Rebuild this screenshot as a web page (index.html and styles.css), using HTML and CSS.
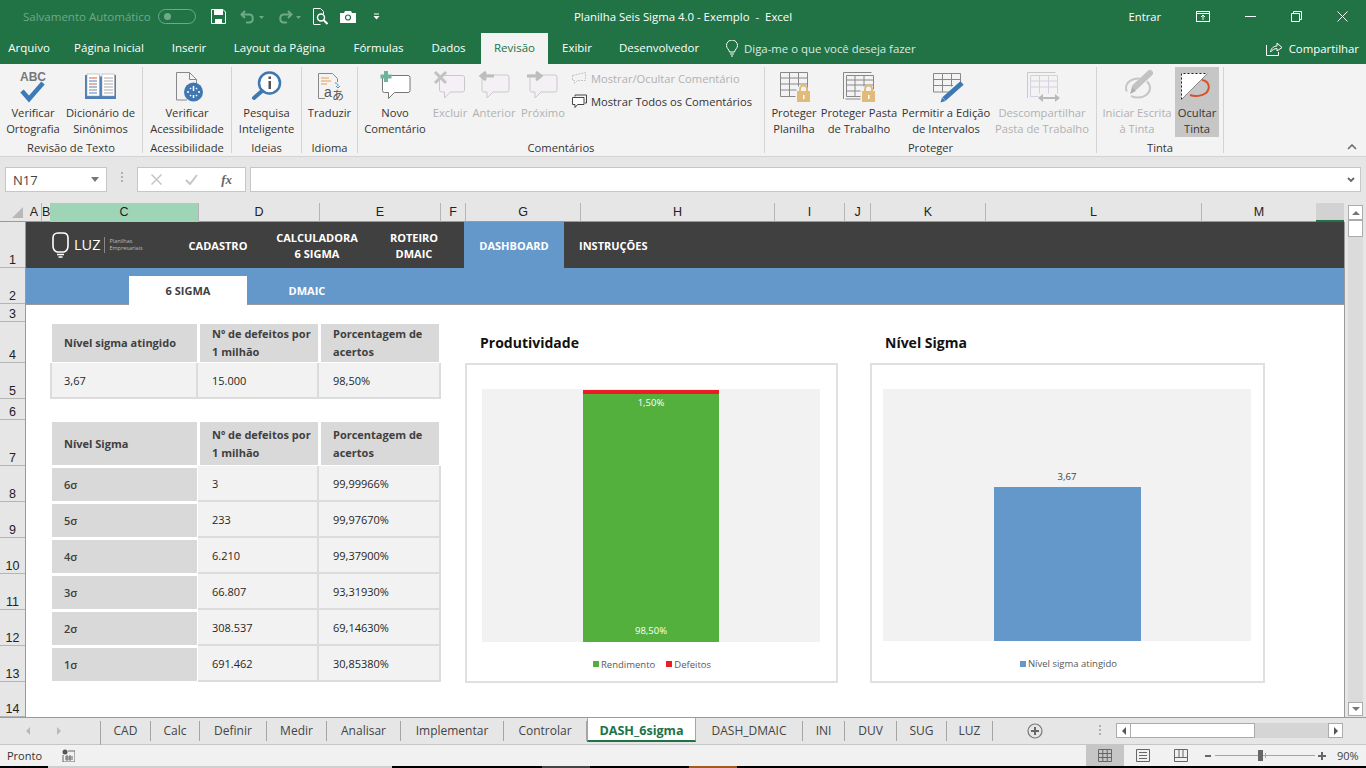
FILE: index.html
```html
<!DOCTYPE html>
<html lang="pt-BR">
<head>
    <meta charset="UTF-8">
    <title>Planilha Seis Sigma 4.0 - Exemplo - Excel</title>
    <link rel="stylesheet" href="styles.css">
</head>
<body>
<div class="app">

    <!-- barra de titulo -->
    <div class="titlebar">
        <div class="qat">
            <span class="autosave">Salvamento Automático</span>
            <span class="toggle"><i></i></span>
            <svg class="qat-save" width="15" height="15" viewBox="0 0 15 15"><path d="M.5.5h11.500l2.500 2.500v11.500H.5z" fill="none" stroke="#fff"/><rect x="3" y="1" width="9" height="5" fill="#fff"/><rect x="4" y="10" width="7" height="4.500" fill="#fff"/></svg>
            <svg class="qat-undo" width="24" height="14" viewBox="0 0 24 14"><path d="M5 1 1.500 4.500 5 8M2 4.500h7c5 0 5 8 0 8H6" fill="none" stroke="#6ea98a" stroke-width="2"/><path d="M19 6h5l-2.500 3z" fill="#6ea98a"/></svg>
            <svg class="qat-redo" width="24" height="14" viewBox="0 0 24 14"><path d="M11 1l3.500 3.500L11 8M14 4.500H7c-5 0-5 8 0 8h3" fill="none" stroke="#6ea98a" stroke-width="2"/><path d="M19 6h5l-2.500 3z" fill="#6ea98a"/></svg>
            <svg class="qat-print" width="15" height="17" viewBox="0 0 15 17"><path d="M.5 16V.5h7l3 3V6" fill="none" stroke="#fff"/><path d="M.5 16.500h7" stroke="#fff"/><circle cx="8" cy="9.500" r="3.500" fill="none" stroke="#fff" stroke-width="1.500"/><path d="M10.500 12l4 4" stroke="#fff" stroke-width="2"/></svg>
            <svg class="qat-cam" width="16" height="13" viewBox="0 0 16 13"><path d="M0 3h4l1-2h6l1 2h4v10H0z" fill="#fff"/><circle cx="8" cy="7.500" r="2.500" fill="none" stroke="#217346" stroke-width="1.200"/></svg>
            <svg class="qat-more" width="7" height="7" viewBox="0 0 7 7"><path d="M1 1h5" stroke="#fff"/><path d="M.5 3h6L3.500 6.500z" fill="#fff"/></svg>
        </div>
        <div class="doc-title">Planilha Seis Sigma 4.0 - Exemplo &nbsp;-&nbsp; Excel</div>
        <div class="win-btns">
            <span class="signin">Entrar</span>
            <svg class="win-display" width="15" height="11" viewBox="0 0 15 11"><rect x=".5" y=".5" width="13" height="10" fill="none" stroke="#fff"/><path d="M1 2.500h12" stroke="#fff"/><path d="M7 9V4.500M5 6l2-2 2 2" fill="none" stroke="#fff"/></svg>
            <svg class="win-min" width="11" height="11" viewBox="0 0 11 11"><path d="M0 5.500h11" stroke="#fff"/></svg>
            <svg class="win-max" width="11" height="11" viewBox="0 0 11 11"><path d="M.5 2.500h8v8h-8zM2.500 2.500v-2h8v8h-2" fill="none" stroke="#fff"/></svg>
            <svg class="win-close" width="11" height="11" viewBox="0 0 11 11"><path d="M.5.500l10 10M10.500.500l-10 10" stroke="#fff"/></svg>
        </div>
    </div>

    <!-- abas da faixa de opcoes -->
    <div class="menu">
        <span class="menu-item">Arquivo</span>
        <span class="menu-item">Página Inicial</span>
        <span class="menu-item">Inserir</span>
        <span class="menu-item">Layout da Página</span>
        <span class="menu-item">Fórmulas</span>
        <span class="menu-item">Dados</span>
        <span class="menu-item active">Revisão</span>
        <span class="menu-item">Exibir</span>
        <span class="menu-item">Desenvolvedor</span>
        <span class="tell-me">
            <svg width="12" height="17" viewBox="0 0 12 17"><path d="M3.500 12C3 9 .5 8.500.5 5.500a5.500 5.500 0 0 1 11 0C11.500 8.500 9 9 8.500 12zM4 14h4M5 16h2" fill="none" stroke="#fff"/></svg>
            Diga-me o que você deseja fazer
        </span>
        <span class="share">
            <svg width="17" height="15" viewBox="0 0 17 15"><path d="M.5 4v10.500h12V11" fill="none" stroke="#fff"/><path d="M4.500 11C5 7 8 5 11 5V2l5 4.500L11 10V7.500C8.500 7.500 6 9 4.500 11z" fill="none" stroke="#fff"/></svg>
            Compartilhar
        </span>
    </div>

    <!-- faixa de opcoes -->
    <div class="ribbon">
        <div class="rib-group g-text">
            <div class="rib-items">
                <div class="rib-btn">
                    <svg class="rib-icon" width="36" height="36" viewBox="0 0 36 36"><text class="icon-abc" x="5" y="14">ABC</text><path d="M7 24l7 8L28 16" fill="none" stroke="#3d7ab8" stroke-width="4.500"/></svg>
                    <span>Verificar<br>Ortografia</span>
                </div>
                <div class="rib-btn">
                    <svg class="rib-icon" width="36" height="36" viewBox="0 0 36 36"><path d="M2 8h14l2 2 2-2h13v24H2z" fill="#4b80bc"/><rect x="4" y="7" width="12.500" height="22" fill="#fff" stroke="#999" stroke-width=".5"/><rect x="19" y="7" width="12.500" height="22" fill="#fff" stroke="#999" stroke-width=".5"/><path d="M6 11h8" stroke="#d9603b"/><path d="M6 14h8M6 20h8M6 26h8" stroke="#4b80bc"/><path d="M6 17h8" stroke="#d9603b"/><path d="M6 23h8" stroke="#888"/><path d="M21 11h9M21 14h9M21 17h9M21 20h9M21 23h9M21 26h9" stroke="#aaa"/></svg>
                    <span>Dicionário de<br>Sinônimos</span>
                </div>
            </div>
            <div class="rib-label">Revisão de Texto</div>
        </div>
        <div class="rib-group g-access">
            <div class="rib-items">
                <div class="rib-btn">
                    <svg class="rib-icon" width="36" height="36" viewBox="0 0 36 36"><path d="M7.500 33V5.500h13l7 7V20M7.500 33H18M20.500 5.500v7h7" fill="none" stroke="#888"/><circle cx="24.500" cy="25" r="9.500" fill="#3e78b3"/><path d="M24.500 19v5M20 25h-2M29 25h2M21 21l1 1M28 21l-1 1M21 29l1-1M28 29l-1-1M24.500 28v3" stroke="#fff" stroke-width="1.500"/></svg>
                    <span>Verificar<br>Acessibilidade</span>
                </div>
            </div>
            <div class="rib-label">Acessibilidade</div>
        </div>
        <div class="rib-group g-ideas">
            <div class="rib-items">
                <div class="rib-btn">
                    <svg class="rib-icon" width="36" height="36" viewBox="0 0 36 36"><circle cx="20.500" cy="16" r="10.500" fill="#fff" stroke="#3e78b3" stroke-width="2.500"/><path d="M13 24l-8 7" stroke="#3e78b3" stroke-width="4" stroke-linecap="round"/><rect x="19.500" y="9.500" width="2.500" height="2.500" fill="#555"/><rect x="19.500" y="14" width="2.500" height="8" fill="#555"/></svg>
                    <span>Pesquisa<br>Inteligente</span>
                </div>
            </div>
            <div class="rib-label">Ideias</div>
        </div>
        <div class="rib-group g-lang">
            <div class="rib-items">
                <div class="rib-btn">
                    <svg class="rib-icon" width="36" height="36" viewBox="0 0 36 36"><path d="M6.500 31.500v-25h14l5 5V15M6.500 31.500H13" fill="none" stroke="#888"/><path d="M9 11h8M9 14h10M9 17h6" stroke="#ed9b4a"/><path d="M23 16c2 0 3 1 3 3M24 19l2 2 2-2" fill="none" stroke="#4b8bd0"/><text class="icon-a" x="12" y="30">a</text><text class="icon-jp" x="20" y="33">あ</text></svg>
                    <span>Traduzir</span>
                </div>
            </div>
            <div class="rib-label">Idioma</div>
        </div>
        <div class="rib-group g-comments">
            <div class="rib-items">
                <div class="rib-btn">
                    <svg class="rib-icon" width="36" height="36" viewBox="0 0 36 36"><path d="M5.500 10.500v13a2 2 0 0 0 2 2h4v6l6-6h13.500a2 2 0 0 0 2-2v-13a2 2 0 0 0-2-2h-24z" fill="#fff" stroke="#777"/><path d="M9 4v11M3.500 9.500h11" stroke="#6db39f" stroke-width="4"/></svg>
                    <span>Novo<br>Comentário</span>
                </div>
                <div class="rib-btn off">
                    <svg class="rib-icon" width="36" height="36" viewBox="0 0 36 36"><path d="M7.500 11v12a2 2 0 0 0 2 2h3v6l6-6h12a2 2 0 0 0 2-2V10.500a2 2 0 0 0-2-2h-22z" fill="#f5f0f6" stroke="#c9c9c9"/><path d="M3 5l11 11M14 5 3 16" stroke="#c2c2c2" stroke-width="3"/></svg>
                    <span>Excluir</span>
                </div>
                <div class="rib-btn off">
                    <svg class="rib-icon" width="36" height="36" viewBox="0 0 36 36"><path d="M6 11v12a2 2 0 0 0 2 2h3v6l6-6h14a2 2 0 0 0 2-2V10a2 2 0 0 0-2-2H6z" fill="#f5f0f6" stroke="#c9c9c9"/><path d="M18 9H6M10 5 5 9l5 4" fill="none" stroke="#bdbdbd" stroke-width="3"/></svg>
                    <span>Anterior</span>
                </div>
                <div class="rib-btn off">
                    <svg class="rib-icon" width="36" height="36" viewBox="0 0 36 36"><path d="M5 11v12a2 2 0 0 0 2 2h3v6l6-6h14a2 2 0 0 0 2-2V10a2 2 0 0 0-2-2H5z" fill="#f5f0f6" stroke="#c9c9c9"/><path d="M2 9h13M11 5l5 4-5 4" fill="none" stroke="#bdbdbd" stroke-width="3"/></svg>
                    <span>Próximo</span>
                </div>
                <div class="rib-stack">
                    <div class="stack-row off">
                        <svg width="15" height="15" viewBox="0 0 15 15"><path d="M.5 4.500l13-3v8h-8l-3 3v-3h-2z" fill="none" stroke="#c4c4c4" stroke-dasharray="2 1"/></svg>
                        Mostrar/Ocultar Comentário
                    </div>
                    <div class="stack-row">
                        <svg width="15" height="15" viewBox="0 0 15 15"><path d="M3 2.500V1h11.500v8H13" fill="none" stroke="#444"/><path d="M.5 3.500h11.500v7H5.500l-2.500 3v-3H.5z" fill="#fff" stroke="#444"/></svg>
                        Mostrar Todos os Comentários
                    </div>
                </div>
            </div>
            <div class="rib-label">Comentários</div>
        </div>
        <div class="rib-group g-protect">
            <div class="rib-items">
                <div class="rib-btn">
                    <svg class="rib-icon" width="36" height="36" viewBox="0 0 36 36"><path d="M4.500 5.500h27v18M4.500 5.500v24h15M4.500 11h27M4.500 17h27M4.500 23h16M13.500 5.500v24M22.500 5.500v14" fill="none" stroke="#888"/><path d="M24 25v-3a3.500 3.500 0 0 1 7 0v3" fill="none" stroke="#e2bb7b" stroke-width="2"/><rect x="21" y="24" width="13" height="11" fill="#e2bb7b"/><rect x="27" y="28" width="1.500" height="4" fill="#fff"/></svg>
                    <span>Proteger<br>Planilha</span>
                </div>
                <div class="rib-btn">
                    <svg class="rib-icon" width="36" height="36" viewBox="0 0 36 36"><path d="M2.500 32V5.500h28M4.500 32h15" fill="none" stroke="#888"/><path d="M5.500 8.500h27v14M5.500 8.500v21h14M5.500 13h27M5.500 18h27M5.500 24h14M14 8.500v21M23 8.500v11" fill="none" stroke="#888"/><path d="M24 25v-3a3.500 3.500 0 0 1 7 0v3" fill="none" stroke="#e2bb7b" stroke-width="2"/><rect x="21" y="24" width="13" height="11" fill="#e2bb7b"/><rect x="27" y="28" width="1.500" height="4" fill="#fff"/></svg>
                    <span>Proteger Pasta<br>de Trabalho</span>
                </div>
                <div class="rib-btn">
                    <svg class="rib-icon" width="36" height="36" viewBox="0 0 36 36"><path d="M5.500 6.500h27v9M5.500 6.500v18.500H22M5.500 12.500h27M5.500 18.500H25M14.500 6.500V25M23.500 6.500v13" fill="none" stroke="#888"/><path d="M16 32l18-16" stroke="#3e78b3" stroke-width="5"/><path d="M12.500 35.500l1.500-5 3.500 3.500z" fill="#3e78b3"/></svg>
                    <span>Permitir a Edição<br>de Intervalos</span>
                </div>
                <div class="rib-btn off">
                    <svg class="rib-icon" width="36" height="36" viewBox="0 0 36 36"><path d="M3.500 31V5.500h28" fill="none" stroke="#c9c9c9"/><path d="M6.500 8.500h27v18M6.500 8.500v21h8M6.500 14h27M6.500 20h27M15.500 8.500v18M24.500 8.500v18" fill="none" stroke="#d5cfe0"/><path d="M15 31h20" stroke="#b9b9b9" stroke-width="2"/><path d="M19 27l-5 4 5 4zM31 27l5 4-5 4z" fill="#b9b9b9"/></svg>
                    <span>Descompartilhar<br>Pasta de Trabalho</span>
                </div>
            </div>
            <div class="rib-label">Proteger</div>
        </div>
        <div class="rib-group g-ink">
            <div class="rib-items">
                <div class="rib-btn off">
                    <svg class="rib-icon" width="36" height="36" viewBox="0 0 36 36"><path d="M16 20 31 6" stroke="#c2c2c2" stroke-width="6" stroke-linecap="round"/><path d="M11 27l2-7 4 4z" fill="#b0b0b0"/><ellipse cx="19" cy="21" rx="12" ry="9.500" fill="none" stroke="#c6c6c6" stroke-width="2" stroke-dasharray="24 6"/></svg>
                    <span>Iniciar Escrita<br>à Tinta</span>
                </div>
                <div class="rib-btn hide-ink">
                    <svg class="rib-icon" width="36" height="36" viewBox="0 0 36 36"><path d="M2.500 6.500h26l-26 26z" fill="#fff"/><path d="M2.500 32.500v-26h26" fill="none" stroke="#222" stroke-dasharray="2 2"/><path d="M2.500 32.500l26-26" stroke="#8a8a8a"/><path d="M23 13c7 1 9 8 4 13-4 3-11 4-16 2" fill="none" stroke="#d8512b" stroke-width="2"/></svg>
                    <span>Ocultar<br>Tinta</span>
                </div>
            </div>
            <div class="rib-label">Tinta</div>
        </div>
        <svg class="rib-collapse" width="10" height="6" viewBox="0 0 10 6"><path d="M1 5l4-4 4 4" fill="none" stroke="#666" stroke-width="1.500"/></svg>
    </div>

    <!-- barra de formulas -->
    <div class="formula-bar">
        <div class="name-box"><span>N17</span><i class="caret"></i></div>
        <span class="grip"></span>
        <div class="fx-box">
            <svg width="11" height="11" viewBox="0 0 11 11"><path d="M.5.500l10 10M10.500.500l-10 10" stroke="#c6c6c6" stroke-width="1.500"/></svg>
            <svg width="13" height="11" viewBox="0 0 13 11"><path d="M1 6l4 4 7-9" fill="none" stroke="#c6c6c6" stroke-width="2"/></svg>
            <span class="fx">fx</span>
        </div>
        <div class="formula-input">
            <svg width="8" height="6" viewBox="0 0 8 6"><path d="M1 1l3 3 3-3" fill="none" stroke="#666" stroke-width="1.800"/></svg>
        </div>
    </div>

    <!-- cabecalho das colunas -->
    <div class="col-heads">
        <div class="corner"><i></i></div>
        <div class="col">A</div>
        <div class="col">B</div>
        <div class="col selected">C</div>
        <div class="col">D</div>
        <div class="col">E</div>
        <div class="col">F</div>
        <div class="col">G</div>
        <div class="col">H</div>
        <div class="col">I</div>
        <div class="col">J</div>
        <div class="col">K</div>
        <div class="col">L</div>
        <div class="col">M</div>
        <div class="col active-col"></div>
        <div class="vscroll-top">
            <span class="sb-btn"><i class="tri-up"></i></span>
        </div>
    </div>

    <div class="workspace">
        <div class="row-heads">
            <div class="rh h46">1</div>
            <div class="rh h36">2</div>
            <div class="rh h18">3</div>
            <div class="rh h41">4</div>
            <div class="rh h36">5</div>
            <div class="rh h21">6</div>
            <div class="rh h46">7</div>
            <div class="rh h36">8</div>
            <div class="rh h36">9</div>
            <div class="rh h36">10</div>
            <div class="rh h36">11</div>
            <div class="rh h36">12</div>
            <div class="rh h36">13</div>
            <div class="rh h35">14</div>
        </div>

        <div class="sheet">
            <div class="nav-top">
                <div class="logo">
                    <svg width="17" height="26" viewBox="0 0 17 26"><path d="M5 20C2 19 1 17 1 14V6c0-3 2-5 5-5h5c3 0 5 2 5 5v8c0 3-1 5-4 6z" fill="none" stroke="#fff" stroke-width="1.600"/><path d="M5 22.500h7M6.500 25h4" stroke="#fff" stroke-width="1.400"/></svg>
                    <span class="logo-name">LUZ</span>
                    <span class="logo-sub">Planilhas<br>Empresariais</span>
                </div>
                <a class="nav-link">CADASTRO</a>
                <a class="nav-link">CALCULADORA<br>6 SIGMA</a>
                <a class="nav-link link-rot">ROTEIRO<br>DMAIC</a>
                <a class="nav-link link-dash">DASHBOARD</a>
                <a class="nav-link link-inst">INSTRUÇÕES</a>
            </div>
            <div class="nav-sub">
                <a class="sub-link current">6 SIGMA</a>
                <a class="sub-link">DMAIC</a>
            </div>

            <div class="dash">
                <div class="tables">
                    <div class="grid-table first-table">
                        <div class="th">Nível sigma atingido</div>
                        <div class="th">Nº de defeitos por<br>1 milhão</div>
                        <div class="th">Porcentagem de<br>acertos</div>
                        <div class="td first">3,67</div>
                        <div class="td">15.000</div>
                        <div class="td">98,50%</div>
                    </div>
                    <div class="grid-table second-table">
                        <div class="th">Nível Sigma</div>
                        <div class="th">Nº de defeitos por<br>1 milhão</div>
                        <div class="th">Porcentagem de<br>acertos</div>
                        <div class="sig">6σ</div><div class="td">3</div><div class="td">99,99966%</div>
                        <div class="sig">5σ</div><div class="td">233</div><div class="td">99,97670%</div>
                        <div class="sig">4σ</div><div class="td">6.210</div><div class="td">99,37900%</div>
                        <div class="sig">3σ</div><div class="td">66.807</div><div class="td">93,31930%</div>
                        <div class="sig">2σ</div><div class="td">308.537</div><div class="td">69,14630%</div>
                        <div class="sig">1σ</div><div class="td">691.462</div><div class="td">30,85380%</div>
                    </div>
                </div>

                <div class="chart-col prod">
                    <h3 class="chart-title">Produtividade</h3>
                    <div class="chart">
                        <div class="plot">
                            <div class="stack-bar">
                                <div class="seg-red"></div>
                                <div class="seg-green">
                                    <span>1,50%</span>
                                    <span>98,50%</span>
                                </div>
                            </div>
                        </div>
                        <div class="legend">
                            <i class="key green"></i><span>Rendimento</span>
                            <i class="key red"></i><span>Defeitos</span>
                        </div>
                    </div>
                </div>

                <div class="chart-col sigma">
                    <h3 class="chart-title">Nível Sigma</h3>
                    <div class="chart">
                        <div class="plot">
                            <div class="sigma-bar">
                                <span class="bar-value">3,67</span>
                                <div class="bar-fill"></div>
                            </div>
                        </div>
                        <div class="legend">
                            <i class="key blue"></i><span>Nível sigma atingido</span>
                        </div>
                    </div>
                </div>
            </div>
        </div>

        <div class="vscroll">
            <span class="sb-thumb"></span>
            <span class="sb-btn down"><i class="tri-down"></i></span>
        </div>
    </div>

    <!-- abas das planilhas -->
    <div class="tabbar">
        <div class="tab-nav"><i class="tri-left"></i><i class="tri-right"></i></div>
        <div class="sheet-tabs">
            <span class="stab">CAD</span>
            <span class="stab">Calc</span>
            <span class="stab">Definir</span>
            <span class="stab">Medir</span>
            <span class="stab">Analisar</span>
            <span class="stab">Implementar</span>
            <span class="stab">Controlar</span>
            <span class="stab on">DASH_6sigma</span>
            <span class="stab">DASH_DMAIC</span>
            <span class="stab">INI</span>
            <span class="stab">DUV</span>
            <span class="stab">SUG</span>
            <span class="stab">LUZ</span>
        </div>
        <svg class="add-sheet" width="16" height="16" viewBox="0 0 16 16"><circle cx="8" cy="8" r="7" fill="none" stroke="#777" stroke-width="1.200"/><path d="M8 4v8M4 8h8" stroke="#666" stroke-width="2"/></svg>
        <span class="grip tab-grip"></span>
        <div class="hscroll">
            <span class="sb-btn"><i class="tri-left dark"></i></span>
            <span class="h-thumb"></span>
            <span class="h-track"></span>
            <span class="sb-btn"><i class="tri-right dark"></i></span>
        </div>
    </div>

    <!-- barra de status -->
    <div class="statusbar">
        <span class="ready">Pronto</span>
        <svg class="macro" width="13" height="13" viewBox="0 0 13 13"><circle cx="3" cy="3" r="2.500" fill="#555"/><path d="M6 2h7v11H1V6" fill="none" stroke="#666"/><path d="M3 8h8M3 10h8M5 6v6M8 6v6" stroke="#666"/></svg>
        <div class="view-btn current">
            <svg width="14" height="13" viewBox="0 0 14 13"><path d="M.5.500h13v12H.5zM.5 4.500h13M.5 8.500h13M4.800.500v12M9.200.500v12" fill="none" stroke="#666"/></svg>
        </div>
        <div class="view-btn">
            <svg width="14" height="13" viewBox="0 0 14 13"><path d="M.5.500h13v12H.5z" fill="none" stroke="#666"/><path d="M3 3.500h8M3 6.500h8M3 9.500h8" stroke="#666"/></svg>
        </div>
        <div class="view-btn">
            <svg width="14" height="13" viewBox="0 0 14 13"><path d="M.5.500h13v12H.5zM.5 8.500h13M5 .500v8M9 .500v8" fill="none" stroke="#666"/></svg>
        </div>
        <span class="zoom-minus"></span>
        <div class="zoom-slider"><i class="tick"></i><i class="thumb"></i></div>
        <span class="zoom-plus"></span>
        <span class="zoom-val">90%</span>
    </div>

    <div class="taskbar">
        <i class="tb-a"></i><i class="tb-b"></i><i class="tb-c"></i><i class="tb-d"></i><i class="tb-e"></i><i class="tb-f"></i>
    </div>
</div>
</body>
</html>
```

FILE: styles.css
```css
* {
    box-sizing: border-box;
}
body {
    margin: 0;
    font-family: "Open Sans", "Noto Sans", sans-serif;
    font-size: 11.5px;
    color: #333;
    background-color: #e6e6e6;
}
.app {
    width: 1366px;
    height: 768px;
    overflow: hidden;
    display: flex;
    flex-direction: column;
}
svg {
    display: block;
    flex: none;
}

/* barra de titulo */
.titlebar {
    height: 33px;
    background-color: #217346;
    color: #fff;
    display: grid;
    grid-template-columns: 1fr auto 1fr;
    align-items: center;
}
.qat, .win-btns {
    display: flex;
    align-items: center;
}
.qat {
    padding-left: 23px;
}
.autosave {
    color: #6ea98a;
    width: 127px;
    white-space: nowrap;
}
.toggle {
    width: 38px;
    height: 15px;
    margin-left: 8px;
    border: 1px solid #6ea98a;
    border-radius: 8px;
    padding: 3px 5px;
}
.toggle i {
    display: block;
    width: 7px;
    height: 7px;
    border-radius: 50%;
    background-color: #6ea98a;
}
.qat-save { margin-left: 15px; }
.qat-undo { margin-left: 14px; }
.qat-redo { margin-left: 13px; }
.qat-print { margin-left: 12px; }
.qat-cam { margin-left: 12px; }
.qat-more { margin-left: 17px; }
.doc-title {
    font-size: 11.4px;
    white-space: nowrap;
}
.win-btns {
    justify-content: flex-end;
    font-size: 11.2px;
}
.signin { margin-right: 35px; }
.win-display { margin-right: 34px; }
.win-min { margin-right: 35px; }
.win-max { margin-right: 35px; }
.win-close { margin-right: 18px; }

/* abas da faixa */
.menu {
    height: 31px;
    background-color: #217346;
    color: #fff;
    display: grid;
    grid-template-columns: 58px 102px 58px 123px 75px 65px 67px 58px 106px auto 1fr;
    align-items: stretch;
}
.menu-item {
    text-align: center;
    line-height: 30px;
    white-space: nowrap;
}
.menu-item.active {
    background-color: #f3f3f3;
    color: #217346;
}
.tell-me, .share {
    display: flex;
    align-items: center;
    gap: 6px;
    font-size: 11.4px;
}
.tell-me {
    margin-left: 14px;
    color: #dce9e2;
}
.share {
    justify-content: flex-end;
    padding-right: 7px;
}

/* faixa de opcoes */
.ribbon {
    height: 93px;
    background-color: #f3f3f3;
    border-bottom: 1px solid #d2d2d2;
    display: flex;
    position: relative;
    padding-top: 3px;
    font-size: 11.2px;
}
.rib-group {
    border-right: 1px solid #d4d4d4;
    margin-bottom: 3px;
    display: flex;
    flex-direction: column;
}
.g-text { width: 143px; }
.g-access { width: 89px; }
.g-ideas { width: 70px; }
.g-lang { width: 56px; }
.g-comments { width: 407px; }
.g-protect { width: 332px; }
.g-ink { width: 127px; }
.rib-items {
    display: grid;
    height: 70px;
    flex: none;
}
.g-text .rib-items { grid-template-columns: 60px 75px; padding-left: 3px; }
.g-access .rib-items, .g-ideas .rib-items, .g-lang .rib-items { grid-template-columns: 1fr; }
.g-comments .rib-items { grid-template-columns: 66px 44px 44px 54px 1fr; padding-left: 4px; }
.g-protect .rib-items { grid-template-columns: 50px 80px 94px 98px; padding-left: 4px; }
.g-ink .rib-items { grid-template-columns: 72px 44px; padding-left: 4px; gap: 2px; }
.rib-btn {
    display: flex;
    flex-direction: column;
    align-items: center;
    text-align: center;
    line-height: 16px;
    white-space: nowrap;
}
.rib-icon {
    margin: 0 0 2px;
}
.rib-btn.off, .stack-row.off {
    color: #b1b1b1;
}
.hide-ink {
    background-color: #c6c6c6;
}
.rib-label {
    text-align: center;
    line-height: 14px;
    padding-top: 4px;
}
.rib-stack {
    padding: 0 0 0 2px;
}
.stack-row {
    display: flex;
    align-items: center;
    gap: 4px;
    height: 23px;
    white-space: nowrap;
}
.rib-collapse {
    position: absolute;
    right: 9px;
    bottom: 6px;
}
.icon-abc {
    font-family: "Liberation Sans", sans-serif;
    font-size: 12px;
    font-weight: bold;
    fill: #777;
}
.icon-a {
    font-family: "Liberation Sans", sans-serif;
    font-size: 14px;
    fill: #555;
}
.icon-jp {
    font-family: "Noto Sans CJK JP", sans-serif;
    font-size: 12px;
    fill: #555;
}

/* barra de formulas */
.formula-bar {
    height: 46px;
    padding: 10px 5px 11px;
    display: flex;
    align-items: stretch;
    background-color: #e6e6e6;
}
.name-box, .fx-box, .formula-input {
    background-color: #fff;
    border: 1px solid #c6c6c6;
    display: flex;
    align-items: center;
}
.name-box {
    width: 102px;
    padding: 0 7px;
    justify-content: space-between;
    font-size: 13px;
    color: #444;
}
.caret {
    border: 4px solid transparent;
    border-top: 5px solid #777;
    border-bottom: 0;
}
.grip {
    width: 2px;
    margin: 5px 14px 0;
    height: 12px;
    background-image: linear-gradient(#b0b0b0 2px, transparent 2px);
    background-size: 2px 4px;
}
.fx-box {
    width: 109px;
    padding: 0 13px;
    justify-content: space-between;
}
.fx {
    font-family: "Liberation Serif", serif;
    font-style: italic;
    font-weight: bold;
    font-size: 13px;
    color: #666;
}
.formula-input {
    margin-left: 4px;
    flex: 1;
    justify-content: flex-end;
    padding-right: 5px;
}

/* colunas */
.col-heads {
    height: 19px;
    display: grid;
    grid-template-columns: 27px 15px 9px 148px 121px 121px 25px 115px 194px 70px 26px 115px 216px 115px 27px 1fr;
    font-family: "Liberation Sans", sans-serif;
    font-size: 12.5px;
    color: #222;
}
.corner {
    position: relative;
    border-bottom: 1px solid #9a9a9a;
}
.corner i {
    position: absolute;
    right: 4px;
    bottom: 3px;
    border-style: solid;
    border-width: 0 0 11px 11px;
    border-color: transparent transparent #b8b8b8 transparent;
}
.col {
    text-align: center;
    line-height: 18px;
    border-right: 1px solid #b5b5b5;
    border-bottom: 1px solid #9a9a9a;
}
.col.selected {
    background-color: #9fd5b7;
    margin-left: -1px;
    border-bottom-color: #9fd5b7;
}
.col.active-col {
    background-color: #d2d2d2;
    margin-left: -1px;
    border-right: 0;
    border-bottom: 2px solid #217346;
}
.vscroll-top {
    padding: 2px 3px 0 4px;
}
.sb-btn {
    display: flex;
    align-items: center;
    justify-content: center;
    background-color: #fff;
    border: 1px solid #ababab;
    height: 15px;
    width: 15px;
    flex: none;
}
.sb-btn.down {
    height: 14px;
}
.tri-up, .tri-down, .tri-left, .tri-right {
    display: block;
    border: 4px solid transparent;
}
.tri-up { border-top: 0; border-bottom: 4px solid #777; }
.tri-down { border-bottom: 0; border-top: 4px solid #777; }
.tri-left { border-left: 0; border-right: 4px solid #b9b9b9; }
.tri-right { border-right: 0; border-left: 4px solid #b9b9b9; }
.tri-left.dark { border-right-color: #555; }
.tri-right.dark { border-left-color: #555; }

/* area da planilha */
.workspace {
    height: 495px;
    display: flex;
}
.row-heads {
    width: 26px;
    flex: none;
    border-right: 1px solid #9a9a9a;
}
.rh {
    display: flex;
    align-items: flex-end;
    justify-content: center;
    border-bottom: 1px solid #b5b5b5;
    font-family: "Liberation Sans", sans-serif;
    font-size: 12.5px;
    line-height: 14px;
    color: #222;
}
.h18 { height: 18px; }
.h21 { height: 21px; }
.h35 { height: 35px; }
.h36 { height: 36px; }
.h41 { height: 41px; }
.h46 { height: 46px; }
.sheet {
    width: 1319px;
    flex: none;
    background-color: #fff;
    border-right: 1px solid #9a9a9a;
}
.nav-top {
    height: 46px;
    background-color: #404040;
    display: grid;
    grid-template-columns: 147px 90px 108px 93px 100px 1fr;
    font-weight: 700;
    font-size: 11px;
    line-height: 16px;
    color: #fff;
}
.logo {
    display: flex;
    align-items: center;
    padding-left: 26px;
}
.logo-name {
    font-size: 14.5px;
    font-weight: 400;
    margin-left: 5px;
    padding-right: 4px;
    border-right: 1px solid #888;
}
.logo-sub {
    font-size: 5.500px;
    font-weight: 400;
    line-height: 7px;
    margin-left: 4px;
    color: #bbb;
}
.nav-link {
    display: flex;
    align-items: center;
    justify-content: center;
    text-align: center;
    white-space: nowrap;
    padding-top: 2px;
}
.link-rot {
    padding-right: 7px;
}
.link-inst {
    justify-content: flex-start;
    padding-left: 15px;
}
.link-dash {
    background-color: #6498cb;
}
.nav-sub {
    height: 37px;
    background-color: #6498cb;
    border-bottom: 1px solid #9a9a9a;
    padding: 8px 0 0 103px;
    display: grid;
    grid-template-columns: 118px 120px;
    font-weight: 700;
    font-size: 11px;
    color: #fff;
}
.sub-link {
    text-align: center;
    line-height: 30px;
}
.sub-link.current {
    background-color: #fff;
    color: #404040;
}

/* painel */
.dash {
    display: flex;
    padding-left: 24px;
}
.tables {
    width: 391px;
    padding-top: 17px;
    flex: none;
}
.grid-table {
    display: grid;
    grid-template-columns: 148px 121px 122px;
}
.first-table {
    grid-template-rows: 41px 36px;
}
.second-table {
    grid-template-rows: 46px repeat(6, 36px);
    margin-top: 21px;
}
.th, .sig {
    background-color: #d9d9d9;
    color: #404040;
    margin: 2px 1px 1px 2px;
    padding-left: 12px;
}
.th {
    display: flex;
    align-items: center;
    font-weight: 700;
    font-size: 11px;
    line-height: 18px;
    white-space: nowrap;
}
.th:nth-child(3n) {
    margin-right: 2px;
}
.td, .sig {
    font-size: 11px;
}
.td {
    background-color: #f2f2f2;
    border-right: 2px solid #dcdcdc;
    border-bottom: 2px solid #dcdcdc;
    color: #262626;
    padding-left: 14px;
    line-height: 35px;
}
.td.first {
    border-left: 2px solid #dcdcdc;
    padding-left: 12px;
}
.sig {
    font-weight: 600;
    line-height: 34px;
}
.chart-col {
    flex: none;
}
.chart-col.prod {
    width: 373px;
    margin-left: 24px;
}
.chart-col.sigma {
    width: 395px;
    margin-left: 32px;
}
.chart-title {
    margin: 0;
    height: 58px;
    padding: 26px 0 0 15px;
    font-size: 14px;
    line-height: 24px;
    font-weight: 700;
    color: #111;
}
.chart {
    height: 320px;
    border: 2px solid #e0e0e0;
    padding: 24px 16px 0 15px;
}
.sigma .chart {
    padding: 24px 12px 0 11px;
}
.plot {
    height: 253px;
    background-color: #f2f2f2;
    display: flex;
    justify-content: center;
    align-items: flex-end;
}
.sigma .plot {
    height: 252px;
}
.stack-bar {
    width: 136px;
    height: 252px;
    display: flex;
    flex-direction: column;
}
.seg-red {
    height: 4px;
    background-color: #ed1c24;
}
.seg-green {
    flex: 1;
    background-color: #54b03c;
    display: flex;
    flex-direction: column;
    justify-content: space-between;
    align-items: center;
    padding: 2px 0 5px;
    color: #fff;
    font-size: 9.500px;
    line-height: 13px;
}
.sigma-bar {
    width: 147px;
    text-align: center;
}
.bar-value {
    font-size: 9.500px;
    line-height: 13px;
    display: block;
    margin-bottom: 4px;
    color: #404040;
}
.bar-fill {
    height: 154px;
    background-color: #6498cb;
}
.legend {
    display: flex;
    justify-content: center;
    align-items: center;
    height: 44px;
    padding-left: 2px;
    font-size: 9.500px;
    color: #595959;
}
.sigma .legend {
    padding-left: 3px;
    height: 45px;
}
.key {
    width: 6px;
    height: 6px;
    margin-right: 2px;
}
.key.red { margin-left: 11px; background-color: #ed1c24; }
.key.green { background-color: #54b03c; }
.key.blue { background-color: #6498cb; }

/* rolagem vertical */
.vscroll {
    margin-left: 3px;
    width: 15px;
    background-color: #dbdbdb;
    display: flex;
    flex-direction: column;
    justify-content: space-between;
    align-items: center;
    height: 494px;
}
.sb-thumb {
    width: 15px;
    height: 17px;
    margin-top: -2px;
    background-color: #fff;
    border: 1px solid #ababab;
    display: block;
}

/* abas das planilhas */
.tabbar {
    height: 28px;
    border-top: 1px solid #9a9a9a;
    border-bottom: 1px solid #c6c6c6;
    display: flex;
    align-items: flex-start;
    background-color: #e6e6e6;
}
.tab-nav {
    width: 100px;
    padding: 9px 39px 0 26px;
    display: flex;
    justify-content: space-between;
}
.sheet-tabs {
    display: grid;
    grid-template-columns: 50px 49px 67px 60px 74px 103px 83px 109px 107px 42px 52px 50px 46px;
    height: 24px;
    border-left: 1px solid #a5a5a5;
    margin-top: 3px;
}
.stab {
    font-size: 12px;
    line-height: 20px;
    text-align: center;
    color: #444;
    border-right: 1px solid #a5a5a5;
    height: 20px;
    white-space: nowrap;
}
.stab.on {
    height: 24px;
    margin-top: -3px;
    line-height: 26px;
    background-color: #fff;
    border-left: 1px solid #a5a5a5;
    border-bottom: 2px solid #217346;
    color: #217346;
    font-size: 12.6px;
    font-weight: 700;
}
.add-sheet {
    margin: 5px 0 0 34px;
}
.tab-grip {
    margin: 7px 15px 0 56px;
}
.hscroll {
    display: flex;
    margin-top: 5px;
    width: 227px;
}
.h-thumb {
    width: 124px;
    height: 15px;
    background-color: #fff;
    border: 1px solid #ababab;
    border-left: 0;
}
.h-track {
    flex: 1;
    height: 15px;
    background-color: #d5d5d5;
}

/* barra de status */
.statusbar {
    height: 21px;
    background-color: #f1f1f1;
    display: flex;
    align-items: center;
    font-size: 11px;
}
.ready {
    margin-left: 7px;
    width: 55px;
}
.view-btn {
    width: 38px;
    height: 21px;
    display: flex;
    align-items: center;
    justify-content: center;
}
.view-btn.current {
    margin-left: 1011px;
    background-color: #c6c6c6;
}
.zoom-minus, .zoom-plus {
    position: relative;
    width: 6px;
    height: 2px;
    background-color: #666;
    margin-left: 5px;
}
.zoom-plus {
    width: 8px;
    margin-left: 3px;
}
.zoom-plus::after {
    content: "";
    position: absolute;
    left: 3px;
    top: -3px;
    width: 2px;
    height: 8px;
    background-color: #666;
}
.zoom-slider {
    position: relative;
    width: 100px;
    height: 1px;
    margin-left: 4px;
    background-color: #a5a5a5;
}
.thumb {
    position: absolute;
    left: 43px;
    top: -5px;
    width: 5px;
    height: 11px;
    background-color: #666;
}
.tick {
    position: absolute;
    left: 50px;
    top: -2px;
    width: 1px;
    height: 5px;
    background-color: #a5a5a5;
}
.zoom-val {
    margin-left: 11px;
    color: #444;
}

/* pedaco da barra do windows */
.taskbar {
    height: 2px;
    display: flex;
    background-color: #000;
}
.taskbar i {
    display: block;
    height: 2px;
}
.tb-a { width: 48px; background-color: #000; }
.tb-b { width: 344px; background-color: #cfcfcf; }
.tb-c { width: 150px; background-color: #000; }
.tb-d { width: 48px; background-color: #444; }
.tb-e { width: 99px; background-color: #000; }
.tb-f { width: 48px; background-color: #a35a20; }
```
